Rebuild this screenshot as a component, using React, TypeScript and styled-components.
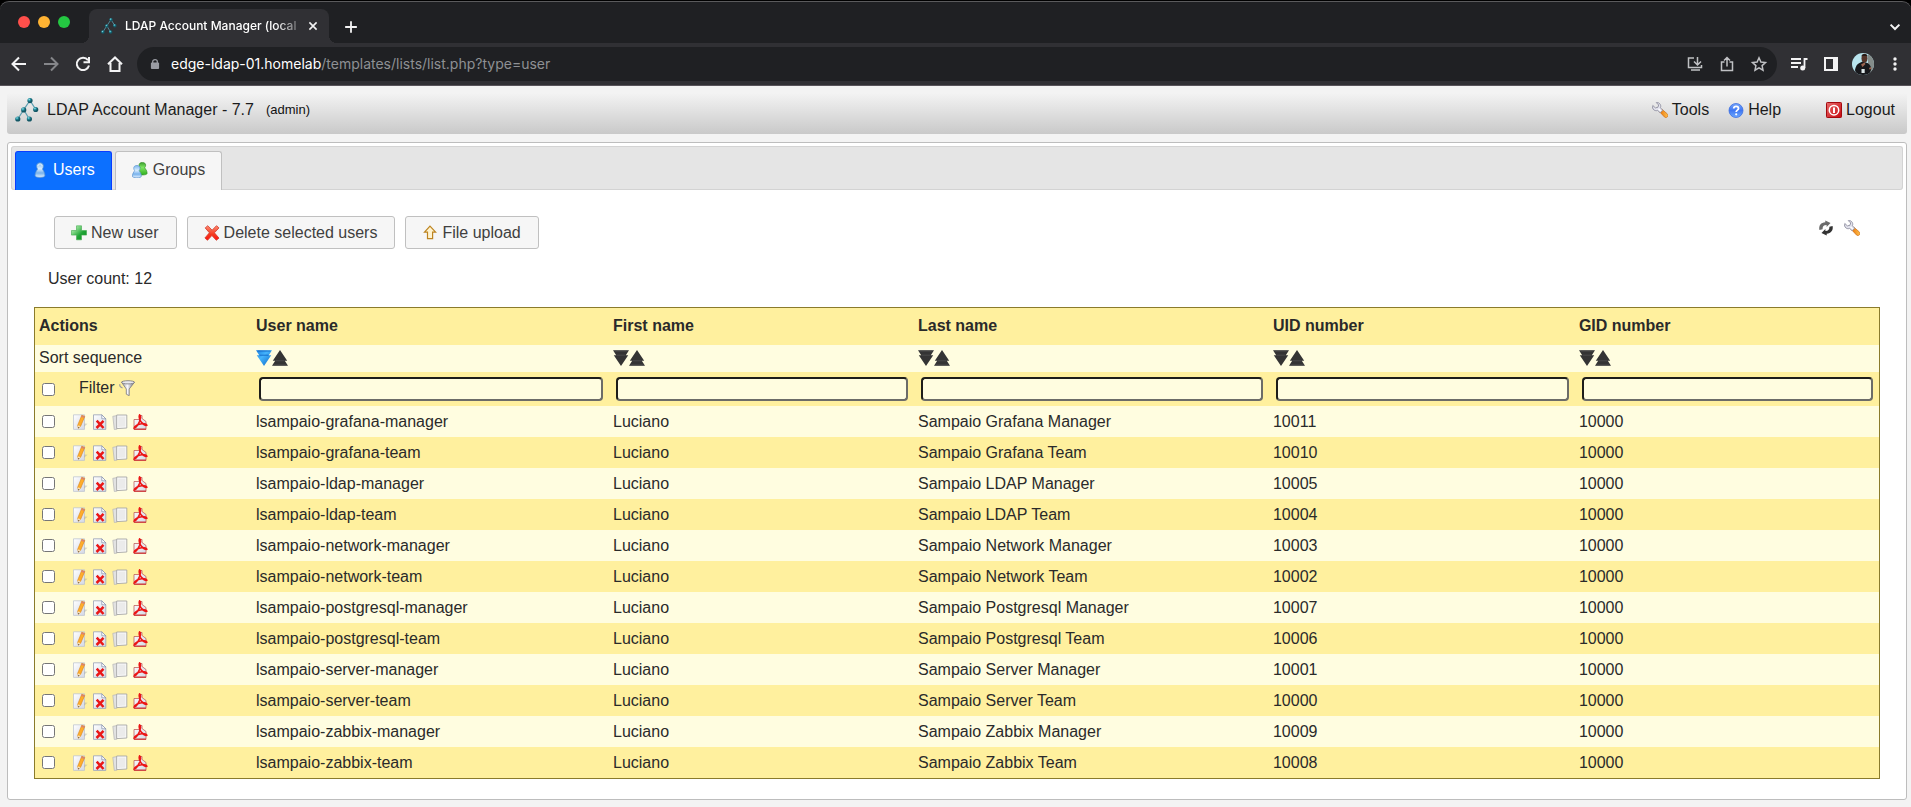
import React from "react";
import styled, { createGlobalStyle, css } from "styled-components";

const uiFont = `"Inter", Roboto, sans-serif`;
const pageFont = `"Liberation Sans", Arial, sans-serif`;

const GlobalStyle = createGlobalStyle`
  * { box-sizing: border-box; }
  body {
    margin: 0;
    background: #f3f3f3;
    color: #2a2a2a;
    font: 16px/20px ${pageFont};
  }
  button { font: inherit; color: inherit; cursor: pointer; }
  a { color: inherit; text-decoration: none; }
  svg { display: block; flex: none; }
`;

/* ---------- Browser window ---------- */

const Browser = styled.div`
  background: #000;
  font-family: ${uiFont};
`;

const TabStrip = styled.div`
  display: flex;
  align-items: flex-end;
  height: 43px;
  background: #1f2023;
  border-top: 1px solid #000;
  box-shadow: inset 0 1px 0 #5a5a5c;
  border-radius: 9px 9px 0 0;
`;

const TrafficLights = styled.div`
  display: flex;
  gap: 8px;
  padding: 0 19px 15px 18px;
`;

const Light = styled.button<{ $color: string }>`
  width: 12px;
  height: 12px;
  padding: 0;
  border: 0;
  border-radius: 50%;
  background: ${(p) => p.$color};
`;

const BrowserTab = styled.div`
  position: relative;
  display: flex;
  align-items: center;
  width: 240px;
  height: 34px;
  padding: 0 8px 0 12px;
  background: #303034;
  border-radius: 8px 8px 0 0;
  &::before,
  &::after {
    content: "";
    position: absolute;
    bottom: 0;
    width: 8px;
    height: 8px;
  }
  &::before {
    left: -8px;
    background: radial-gradient(circle at 0 0, transparent 8px, #303034 8px);
  }
  &::after {
    right: -8px;
    background: radial-gradient(circle at 100% 0, transparent 8px, #303034 8px);
  }
`;

const TabTitle = styled.span`
  flex: 1;
  margin: 0 8px;
  overflow: hidden;
  white-space: nowrap;
  color: #fff;
  font-size: 12px;
  font-weight: 500;
  mask-image: linear-gradient(90deg, #000 88%, rgba(0, 0, 0, 0.3));
`;

const ChromeButton = styled.button<{ $tone?: string; $size?: number }>`
  display: grid;
  place-items: center;
  flex: none;
  width: ${(p) => p.$size ?? 32}px;
  height: ${(p) => p.$size ?? 32}px;
  padding: 0;
  border: 0;
  background: none;
  color: ${(p) => p.$tone ?? "#f3f3f4"};
`;

const NewTabArea = styled.div`
  flex: 1;
  padding-left: 6px;
`;

const Toolbar = styled.div`
  display: flex;
  align-items: center;
  height: 43px;
  padding-left: 3px;
  background: #303034;
  border-bottom: 1px solid #58545a;
`;

const AddressBar = styled.div`
  display: flex;
  align-items: center;
  flex: 1;
  height: 34px;
  margin: 0 6px;
  padding: 0 2px 0 13px;
  border-radius: 17px;
  background: #1f2023;
`;

const Url = styled.div`
  flex: 1;
  padding-left: 11px;
  color: #8e9094;
  font-size: 14px;
  white-space: nowrap;
`;

const UrlHost = styled.span`
  color: #fff;
`;

/* ---------- Application page ---------- */

const AppHeader = styled.header`
  display: flex;
  align-items: center;
  height: 48px;
  margin: 0 4px 0 7px;
  padding: 0 12px 0 8px;
  border-radius: 0 0 3px 3px;
  background: linear-gradient(#f3f3f3 15%, #c9c9c9);
  color: #1c1c1c;
`;

const AppName = styled.a`
  display: flex;
  align-items: center;
  gap: 8px;
`;

const UserTag = styled.span`
  flex: 1;
  margin-left: 12px;
  color: #111;
  font-size: 13px;
`;

const HeaderLink = styled.a<{ $apart?: boolean }>`
  display: flex;
  align-items: center;
  gap: 4px;
  margin-left: ${(p) => (p.$apart ? 45 : 19)}px;
`;

const Panel = styled.main`
  margin: 8px 4px 6px 7px;
  padding: 3px;
  border: 1px solid #bdbdbd;
  border-radius: 3px;
  background: #fff;
`;

const Tabs = styled.nav`
  display: flex;
  gap: 3px;
  padding: 4px 3px 0;
  border: 1px solid #d3d3d3;
  border-bottom: 0;
  border-radius: 3px;
  background: #e5e5e5;
  box-shadow: inset 0 -1px 0 #d3d3d3;
`;

const buttonFace = css`
  border: 1px solid #c0c0c0;
  background: #f6f6f6;
  color: #404040;
`;

const Tab = styled.a<{ $active?: boolean }>`
  ${buttonFace}
  display: flex;
  align-items: center;
  gap: 5px;
  height: 39px;
  padding: 0 16px 2px;
  border-bottom: 0;
  border-radius: 3px 3px 0 0;
  ${(p) =>
    p.$active &&
    css`
      border-color: #0a3cff;
      background: #0c70ff;
      color: #fff;
    `}
`;

const Content = styled.div`
  padding: 26px 23px 17px;
`;

const Actions = styled.div`
  display: flex;
  align-items: center;
  gap: 10px;
  padding: 0 20px;
`;

const ActionButton = styled.button`
  ${buttonFace}
  display: flex;
  align-items: center;
  gap: 4px;
  height: 33px;
  padding: 0 17px 0 16px;
  border-radius: 3px;
`;

const SideTools = styled.div`
  display: flex;
  gap: 10px;
  margin-left: auto;
  padding-bottom: 10px;
`;

const IconButton = styled.button`
  display: block;
  padding: 0;
  border: 0;
  background: none;
`;

const Count = styled.p`
  margin: 0;
  padding: 20px 14px 18px;
`;

const UserTable = styled.table`
  width: 100%;
  table-layout: fixed;
  border-collapse: separate;
  border-spacing: 0;
  border: 1px solid #8a7b2c;
  th {
    font-weight: bold;
  }
  th,
  td {
    padding: 0 4px;
    overflow: hidden;
    text-align: left;
    vertical-align: middle;
    white-space: nowrap;
  }
`;

const Column = styled.col<{ $share: number }>`
  width: ${(p) => p.$share}%;
`;

const Row = styled.tr<{ $height: number; $shade?: boolean; $head?: boolean }>`
  height: ${(p) => p.$height}px;
  background: ${(p) => (p.$shade ? "#fff09e" : "#fffde0")};
  ${(p) =>
    p.$head &&
    css`
      && > * {
        padding-bottom: 2px;
      }
    `}
`;

const Tools = styled.div`
  display: flex;
  align-items: center;
`;

const Check = styled.input.attrs({ type: "checkbox" })`
  width: 13px;
  height: 13px;
  margin: 0 17px 0 3px;
`;

const ToolGroup = styled.div`
  display: flex;
  gap: 4px;
`;

const FilterLabel = styled.span`
  display: flex;
  align-items: center;
  gap: 4px;
  padding: 0 0 2px 7px;
`;

const FilterInput = styled.input`
  display: block;
  width: calc(100% - 5px);
  height: 24px;
  margin-left: 3px;
  padding: 1px 4px;
  border: 2px solid;
  border-color: #1d1d1a #6c6c68 #6c6c68 #1d1d1a;
  border-radius: 4px;
  background: #fffde0;
  font: inherit;
`;

/* ---------- Icons ---------- */

const SharedGradients = () => (
  <svg width="0" height="0" style={{ position: "absolute" }} aria-hidden="true">
    <defs>
      <radialGradient id="node" cx="35%" cy="30%">
        <stop offset="0" stopColor="#a8e8f0" />
        <stop offset="0.45" stopColor="#2593a3" />
        <stop offset="1" stopColor="#135765" />
      </radialGradient>
      <linearGradient id="bluePawn" x2="0" y2="1">
        <stop offset="0" stopColor="#7db8ef" />
        <stop offset="0.4" stopColor="#d8ecff" />
        <stop offset="0.7" stopColor="#78b2ec" />
        <stop offset="1" stopColor="#e4f2ff" />
      </linearGradient>
      <linearGradient id="greenPawn" x2="0" y2="1">
        <stop offset="0" stopColor="#3a9d2c" />
        <stop offset="0.4" stopColor="#7ee563" />
        <stop offset="1" stopColor="#2fae1d" />
      </linearGradient>
      <linearGradient id="plus" x2="1" y2="1">
        <stop offset="0.2" stopColor="#9be59c" />
        <stop offset="0.6" stopColor="#21a537" />
        <stop offset="1" stopColor="#0d8b22" />
      </linearGradient>
      <linearGradient id="cross" x2="0" y2="1">
        <stop offset="0" stopColor="#ff8a72" />
        <stop offset="0.6" stopColor="#f5391f" />
        <stop offset="1" stopColor="#ff1111" />
      </linearGradient>
      <linearGradient id="handle" x2="1" y2="0">
        <stop offset="0" stopColor="#e87409" />
        <stop offset="1" stopColor="#ffc04d" />
      </linearGradient>
      <linearGradient id="help" x2="0" y2="1">
        <stop offset="0" stopColor="#76a6fb" />
        <stop offset="0.5" stopColor="#3f77f2" />
        <stop offset="1" stopColor="#6faaff" />
      </linearGradient>
      <linearGradient id="power" x2="1" y2="1">
        <stop offset="0" stopColor="#e86a6a" />
        <stop offset="1" stopColor="#c8080f" />
      </linearGradient>
      <linearGradient id="paper" x2="1" y2="1">
        <stop offset="0" stopColor="#ffffff" />
        <stop offset="1" stopColor="#d3d8e6" />
      </linearGradient>
      <linearGradient id="blueSort" x2="1" y2="1">
        <stop offset="0" stopColor="#1b7fe0" />
        <stop offset="0.4" stopColor="#45b4fc" />
        <stop offset="1" stopColor="#0a63c2" />
      </linearGradient>
      <linearGradient id="funnel" x2="1" y2="0">
        <stop offset="0" stopColor="#8b8b94" />
        <stop offset="0.45" stopColor="#fafaff" />
        <stop offset="1" stopColor="#6e6e78" />
      </linearGradient>
    </defs>
  </svg>
);

type GlyphProps = { size?: number; box?: number; children: React.ReactNode };

const Glyph = ({ size = 16, box = 16, children }: GlyphProps) => (
  <svg width={size} height={size} viewBox={`0 0 ${box} ${box}`} fill="none" aria-hidden="true">
    {children}
  </svg>
);

const Logo = ({ size = 24 }: { size?: number }) => (
  <Glyph size={size} box={24}>
    <path d="M15 2.5 8.7 11.7M15 2.5l5.7 8.8M8.7 11.7 2.8 21M8.7 11.7l5.6 9.3" stroke="#5b9eb0" strokeWidth="1.2" />
    {[[15, 2.6], [8.7, 11.9], [20.7, 11.5], [2.8, 21], [14.4, 21]].map(([x, y]) => (
      <circle key={`${x}-${y}`} cx={x} cy={y} r="2.6" fill="url(#node)" />
    ))}
  </Glyph>
);

const pawn = "M8 .8c2.2 0 3.4 1.4 3.4 3.2 0 1.5-.6 2.3-1 3 .9 1.7 2.5 3.5 2.5 6.5 0 1.3-2 1.9-4.900 1.900s-4.900-.6-4.900-1.900c0-3 1.600-4.800 2.500-6.500-.4-.7-1-1.500-1-3C4.600 2.200 5.800.8 8 .8z";

const UserIcon = () => (
  <Glyph>
    <path d={pawn} fill="url(#bluePawn)" stroke="#5c93cf" strokeWidth=".7" />
    <path d="M6 4c0-1.200.8-2 2-2s2 .8 2 2" stroke="#fff" strokeOpacity=".7" />
  </Glyph>
);

const GroupIcon = () => (
  <Glyph>
    <g transform="translate(2.600 -.3) scale(.97 .86)">
      <path d={pawn} fill="url(#greenPawn)" stroke="#2c8a20" strokeWidth=".7" />
    </g>
    <g transform="translate(-2.500 2.800) scale(.92 .84)">
      <path d={pawn} fill="url(#bluePawn)" stroke="#5c93cf" strokeWidth=".8" />
    </g>
  </Glyph>
);

const WrenchIcon = () => (
  <Glyph>
    <path d="M7.700 9.900 10.300 7.600l5 4.300c.9.900.9 2 .1 2.900-.9 1-2 1-2.900.2z" fill="url(#handle)" stroke="#cf6a10" strokeWidth=".7" />
    <path
      d="M4.300.6 6.700 3 5.900 5.300 3.400 5.900.8 3.500C.2 5.300.7 6.900 1.900 7.900c1.200.9 2.600 1 3.700.5l2.500 2.300 2.600-2.500-2.300-2.500c.6-1.300.4-2.800-.6-3.900C6.900.8 5.600.3 4.300.6z"
      fill="#e4e4ee"
      stroke="#8d8d9e"
      strokeWidth=".9"
    />
    <path d="m6.500 6.800 2.400 2.400" stroke="#fff" strokeWidth="1.200" />
  </Glyph>
);

const HelpIcon = () => (
  <Glyph>
    <circle cx="8" cy="8.500" r="7" fill="url(#help)" stroke="#3d6fe0" strokeWidth=".8" />
    <path d="M5.700 6.500C5.800 5 6.800 4.400 8.100 4.400c1.500 0 2.400.8 2.400 2 0 1.800-2.300 1.700-2.300 3.500" stroke="#fff" strokeWidth="1.800" />
    <circle cx="8.200" cy="12.300" r="1.100" fill="#fff" />
  </Glyph>
);

const PowerIcon = () => (
  <Glyph>
    <rect x=".5" y=".5" width="15" height="15" rx=".8" fill="url(#power)" stroke="#a30a0f" />
    <circle cx="8" cy="8.200" r="4.700" stroke="#fff" strokeWidth="1.500" />
    <path d="M8 5.500v5.400" stroke="#fff" strokeWidth="2" />
  </Glyph>
);

const PlusIcon = () => (
  <Glyph>
    <path d="M5.500.8h5v4.700h5v4.600h-5v4.700h-5v-4.700h-5V5.500h5z" fill="url(#plus)" stroke="#41a94e" strokeWidth=".6" />
  </Glyph>
);

const CrossIcon = () => (
  <Glyph>
    <path d="m3.800.7 4.300 4.500L12.500.7l2.500 2.200-4.600 4.900 4.600 5.300-2.700 2.200-4.400-4.800-4.400 4.800L.9 13l4.500-5.200L1.200 2.900z" fill="url(#cross)" stroke="#d13a2a" strokeWidth=".8" />
  </Glyph>
);

const UploadIcon = () => (
  <Glyph>
    <path d="m8 1.200 5.600 6h-3v6.400H5.500V7.200h-3z" fill="#fff3cf" stroke="#bd8420" strokeWidth="1.200" />
  </Glyph>
);

const RefreshIcon = () => (
  <Glyph>
    <path d="M7.300.4 12.500 3 8.600 7V5C5.600 5 4.400 6.500 4.600 9.200L1.400 9.900C.5 5.600 3 2.500 7.300 2.300z" fill="#6b6b6b" />
    <path d="M8.700 15.600 3.500 13l3.900-4v2c3 0 4.200-1.500 4-4.200l3.200-.7c.9 4.300-1.600 7.400-5.900 7.600z" fill="#333" />
  </Glyph>
);

const SortIcon = ({ up, active }: { up?: boolean; active?: boolean }) => (
  <Glyph>
    <g transform={up ? "rotate(180 8 8)" : undefined}>
      <path d="M0 .3h16l-3.200 4.900h2.400L8 16 .8 5.200h2.400z" fill={active ? "url(#blueSort)" : "#343434"} />
      <path d="M3.500 5.200h9M1.500 1h13" stroke={active ? "#0d5fc0" : "#505050"} strokeWidth=".8" />
    </g>
  </Glyph>
);

const FunnelIcon = () => (
  <Glyph>
    <path d="M3.500 7.800C1.300 7.300.4 5.800 1 4.200" stroke="#9a9aa0" strokeWidth="1.200" />
    <path d="M2.500 2.200 7.300 9v5.200l2.900 1.500V9l5.300-6.800z" fill="url(#funnel)" stroke="#77777f" strokeWidth=".8" />
    <ellipse cx="9" cy="2.300" rx="6.500" ry="1.600" fill="#e9e9ee" stroke="#77777f" strokeWidth=".8" />
  </Glyph>
);

const EditIcon = () => (
  <Glyph>
    <path d="M1.500.8h11v14.600h-11z" fill="url(#paper)" stroke="#b9c0cf" strokeWidth=".7" />
    <path d="m12.500 9.500 3 .3-3.500 3z" fill="#999" fillOpacity=".4" />
    <path d="M9.800 1.200 12.800 2.400 8.600 12.300 6.300 14.300 5.700 11.200z" fill="#ffad2b" stroke="#d68416" strokeWidth=".6" />
    <path d="m9.800 1.200 3 1.200-.7 1.600-3-1.200z" fill="#d98272" />
    <path d="m5.700 11.200.6 3.100 2.300-2z" fill="#f1dfbd" />
    <path d="m6.100 13 .2 1.300.9-.8z" fill="#333" />
  </Glyph>
);

const DeleteIcon = () => (
  <Glyph>
    <path d="M1.500.8h8.300l4 4v10.600H1.500z" fill="url(#paper)" stroke="#97a0b5" strokeWidth=".8" />
    <path d="M9.800.8v4h4z" fill="#fff" stroke="#7f8ba8" strokeWidth=".7" />
    <path d="m4.700 6.700 6.800 7.300M11.500 6.900 4.500 14" stroke="#ea1717" strokeWidth="2.500" />
  </Glyph>
);

const CopyIcon = () => (
  <Glyph>
    <path d="m.8 2.300 4.200-.7v13.500l-2.700.4z" fill="#e2e2e2" stroke="#b5b5b5" strokeWidth=".7" />
    <path d="M4.700 1h10.100v13l-10.100.6z" fill="#fafafa" stroke="#a6a6a6" strokeWidth=".9" />
    <path d="M6.200 2.500h7.100v10l-7.100.5z" fill="#ebebeb" />
  </Glyph>
);

const PdfIcon = () => (
  <Glyph>
    <path d="M2 5.500h5.500L8 1.500h2v3l4 3v7.900H2z" fill="url(#paper)" stroke="#b84a4a" strokeWidth=".7" />
    <path d="M2 15.200h12" stroke="#d04040" strokeWidth="1.400" />
    <path d="M7.600.9c1.400.8 1 3.500 0 6.300-1.200 3.100-3.100 6.100-5.400 6.900 0-2 4.400-4.100 7.600-4.400 2.700-.2 5 .4 5 1.600-2.600.3-5.900-2.500-7-5.700-.6-1.900-.8-3.700-.2-4.700z" stroke="#ec1515" strokeWidth="1.600" />
  </Glyph>
);

const BrowserIcon = ({ d, size = 20, weight = 2 }: { d: string; size?: number; weight?: number }) => (
  <Glyph size={size} box={20}>
    <path d={d} stroke="currentColor" strokeWidth={weight} />
  </Glyph>
);

const LockIcon = () => (
  <Glyph size={10} box={10}>
    <path d="M2.700 4.500V2.600C2.700 1.400 3.700.7 5 .7s2.300.7 2.300 1.900v1.900" stroke="#9a9ca3" strokeWidth="1.300" />
    <rect x=".9" y="3.600" width="8.200" height="6.400" rx="1" fill="#9a9ca3" />
  </Glyph>
);

const SidePanelIcon = () => (
  <Glyph>
    <path d="M1 1h14v14H1zM3 3v10h7V3z" fill="currentColor" fillRule="evenodd" />
  </Glyph>
);

const MusicIcon = () => (
  <Glyph size={20} box={20}>
    <path d="M2 5h10M2 9h10M2 13h7M15.500 14V5h3" stroke="currentColor" strokeWidth="1.800" />
    <circle cx="13.700" cy="14" r="2.500" fill="currentColor" />
  </Glyph>
);

const Avatar = () => (
  <Glyph size={22} box={22}>
    <clipPath id="avatarClip">
      <circle cx="11" cy="11" r="11" />
    </clipPath>
    <g clipPath="url(#avatarClip)">
      <path d="M0 0h22v22H0z" fill="#b9e4ee" />
      <path d="M16 0h6v22h-6z" fill="#848c8a" />
      <path d="M4 22c.3-3-1.500-4-.8-6C4 13 5 11 7.500 10l3-1.500 5 1.500c3 2 4 4 3.500 7l-2 5z" fill="#17181c" />
      <ellipse cx="12.500" cy="5.200" rx="3" ry="4.400" fill="#543429" />
      <path d="M9.300 3.500C9.500.5 15.500.5 15.800 3.500L15 2.700h-5z" fill="#161313" />
      <path d="m9 11.500 3.500-2 1 1.500-3 3zM17 15l2-1 .5 2-2 .5z" fill="#9a6450" />
      <path d="M9.500 16h3.200v4H9.500z" fill="#dce6e8" />
    </g>
  </Glyph>
);

const MoreIcon = () => (
  <Glyph>
    {[3, 8, 13].map((y) => (
      <circle key={y} cx="8" cy={y} r="1.700" fill="currentColor" />
    ))}
  </Glyph>
);

/* ---------- Data ---------- */

const columns = [
  { name: "Actions", share: 11.77 },
  { name: "User name", share: 19.36 },
  { name: "First name", share: 16.54 },
  { name: "Last name", share: 19.25 },
  { name: "UID number", share: 16.59 },
  { name: "GID number", share: 16.49 },
];

const fields = columns.slice(1);

const users = [
  ["lsampaio-grafana-manager", "Luciano", "Sampaio Grafana Manager", "10011", "10000"],
  ["lsampaio-grafana-team", "Luciano", "Sampaio Grafana Team", "10010", "10000"],
  ["lsampaio-ldap-manager", "Luciano", "Sampaio LDAP Manager", "10005", "10000"],
  ["lsampaio-ldap-team", "Luciano", "Sampaio LDAP Team", "10004", "10000"],
  ["lsampaio-network-manager", "Luciano", "Sampaio Network Manager", "10003", "10000"],
  ["lsampaio-network-team", "Luciano", "Sampaio Network Team", "10002", "10000"],
  ["lsampaio-postgresql-manager", "Luciano", "Sampaio Postgresql Manager", "10007", "10000"],
  ["lsampaio-postgresql-team", "Luciano", "Sampaio Postgresql Team", "10006", "10000"],
  ["lsampaio-server-manager", "Luciano", "Sampaio Server Manager", "10001", "10000"],
  ["lsampaio-server-team", "Luciano", "Sampaio Server Team", "10000", "10000"],
  ["lsampaio-zabbix-manager", "Luciano", "Sampaio Zabbix Manager", "10009", "10000"],
  ["lsampaio-zabbix-team", "Luciano", "Sampaio Zabbix Team", "10008", "10000"],
];

const rowActions = [
  { label: "Edit", Icon: EditIcon },
  { label: "Delete", Icon: DeleteIcon },
  { label: "Copy", Icon: CopyIcon },
  { label: "Create PDF", Icon: PdfIcon },
];

/* ---------- Page ---------- */

const BrowserChrome = () => (
  <Browser>
    <TabStrip>
      <TrafficLights>
        <Light $color="#ff4f4b" aria-label="Close window" />
        <Light $color="#ffb333" aria-label="Minimize window" />
        <Light $color="#24c742" aria-label="Zoom window" />
      </TrafficLights>
      <BrowserTab>
        <Logo size={16} />
        <TabTitle>LDAP Account Manager (local</TabTitle>
        <ChromeButton $size={16} aria-label="Close tab">
          <BrowserIcon size={16} d="m5.500 5.500 9 9M14.500 5.500l-9 9" />
        </ChromeButton>
      </BrowserTab>
      <NewTabArea>
        <ChromeButton aria-label="New tab">
          <BrowserIcon size={18} d="M10 3.500v13M3.500 10h13" weight={2} />
        </ChromeButton>
      </NewTabArea>
      <ChromeButton aria-label="Search tabs">
        <BrowserIcon size={16} d="m4.500 7 5.500 5.500L15.500 7" weight={2.500} />
      </ChromeButton>
    </TabStrip>
    <Toolbar>
      <ChromeButton aria-label="Back">
        <BrowserIcon d="M17 10H4M10 3.500 3.500 10l6.500 6.500" />
      </ChromeButton>
      <ChromeButton aria-label="Forward" $tone="#85868a">
        <BrowserIcon d="M3 10h13M10 3.500l6.500 6.500-6.500 6.500" />
      </ChromeButton>
      <ChromeButton aria-label="Reload">
        <BrowserIcon d="M15 6.200A6.200 6.200 0 1 0 16 11.500M16 3v5.200h-5.500" />
      </ChromeButton>
      <ChromeButton aria-label="Home">
        <BrowserIcon d="M3 10.200 10 3.500l7 6.700M5.500 9v8h9V9" />
      </ChromeButton>
      <AddressBar>
        <LockIcon />
        <Url>
          <UrlHost>edge-ldap-01.homelab</UrlHost>/templates/lists/list.php?type=user
        </Url>
        <ChromeButton aria-label="Install" $tone="#c0c1c4">
          <BrowserIcon weight={1.500} d="M9 4H3.500v9.500h13V11M12.500 3v7M9 7.500l3.500 3.500L16 7.500M6 16h9" />
        </ChromeButton>
        <ChromeButton aria-label="Share" $tone="#c0c1c4">
          <BrowserIcon weight={1.500} d="M7.500 8h-3v8.500h11V8h-3M10 12.500V4M7 6.500l3-3 3 3" />
        </ChromeButton>
        <ChromeButton aria-label="Bookmark" $tone="#c0c1c4">
          <BrowserIcon weight={1.500} d="m10 3.800 1.900 4.200 4.600.5-3.400 3.100.9 4.600-4-2.400-4 2.400.9-4.600-3.400-3.100 4.600-.5z" />
        </ChromeButton>
      </AddressBar>
      <ChromeButton aria-label="Media">
        <MusicIcon />
      </ChromeButton>
      <ChromeButton aria-label="Side panel">
        <SidePanelIcon />
      </ChromeButton>
      <ChromeButton aria-label="Profile">
        <Avatar />
      </ChromeButton>
      <ChromeButton aria-label="Menu">
        <MoreIcon />
      </ChromeButton>
    </Toolbar>
  </Browser>
);

const App = () => (
  <>
    <GlobalStyle />
    <SharedGradients />
    <BrowserChrome />
    <AppHeader>
      <AppName href="#home">
        <Logo />
        LDAP Account Manager - 7.7
      </AppName>
      <UserTag>(admin)</UserTag>
      <HeaderLink href="#tools">
        <WrenchIcon />
        Tools
      </HeaderLink>
      <HeaderLink href="#help">
        <HelpIcon />
        Help
      </HeaderLink>
      <HeaderLink href="#logout" $apart>
        <PowerIcon />
        Logout
      </HeaderLink>
    </AppHeader>
    <Panel>
      <Tabs>
        <Tab href="#users" $active>
          <UserIcon />
          Users
        </Tab>
        <Tab href="#groups">
          <GroupIcon />
          Groups
        </Tab>
      </Tabs>
      <Content>
        <Actions>
          <ActionButton>
            <PlusIcon />
            New user
          </ActionButton>
          <ActionButton>
            <CrossIcon />
            Delete selected users
          </ActionButton>
          <ActionButton>
            <UploadIcon />
            File upload
          </ActionButton>
          <SideTools>
            <IconButton aria-label="Refresh">
              <RefreshIcon />
            </IconButton>
            <IconButton aria-label="Change settings">
              <WrenchIcon />
            </IconButton>
          </SideTools>
        </Actions>
        <Count>User count: 12</Count>
        <UserTable>
          <colgroup>
            {columns.map((c) => (
              <Column key={c.name} $share={c.share} />
            ))}
          </colgroup>
          <thead>
            <Row $height={37} $shade $head>
              {columns.map((c) => (
                <th key={c.name} scope="col">
                  {c.name}
                </th>
              ))}
            </Row>
          </thead>
          <tbody>
            <Row $height={27} $head>
              <td>Sort sequence</td>
              {fields.map((c, i) => (
                <td key={c.name}>
                  <Tools>
                    <IconButton aria-label={`Sort by ${c.name}, ascending`}>
                      <SortIcon active={i === 0} />
                    </IconButton>
                    <IconButton aria-label={`Sort by ${c.name}, descending`}>
                      <SortIcon up />
                    </IconButton>
                  </Tools>
                </td>
              ))}
            </Row>
            <Row $height={34} $shade>
              <td>
                <Tools>
                  <Check aria-label="Select all users" />
                  <FilterLabel>
                    Filter
                    <IconButton aria-label="Apply filter">
                      <FunnelIcon />
                    </IconButton>
                  </FilterLabel>
                </Tools>
              </td>
              {fields.map((c) => (
                <td key={c.name}>
                  <FilterInput type="text" aria-label={`Filter by ${c.name}`} />
                </td>
              ))}
            </Row>
            {users.map((user, i) => (
              <Row key={user[0]} $height={31} $shade={i % 2 === 1}>
                <td>
                  <Tools>
                    <Check aria-label={`Select ${user[0]}`} />
                    <ToolGroup>
                      {rowActions.map(({ label, Icon }) => (
                        <IconButton key={label} aria-label={`${label} ${user[0]}`}>
                          <Icon />
                        </IconButton>
                      ))}
                    </ToolGroup>
                  </Tools>
                </td>
                {user.map((value, k) => (
                  <td key={fields[k].name}>{value}</td>
                ))}
              </Row>
            ))}
          </tbody>
        </UserTable>
      </Content>
    </Panel>
  </>
);

export default App;
